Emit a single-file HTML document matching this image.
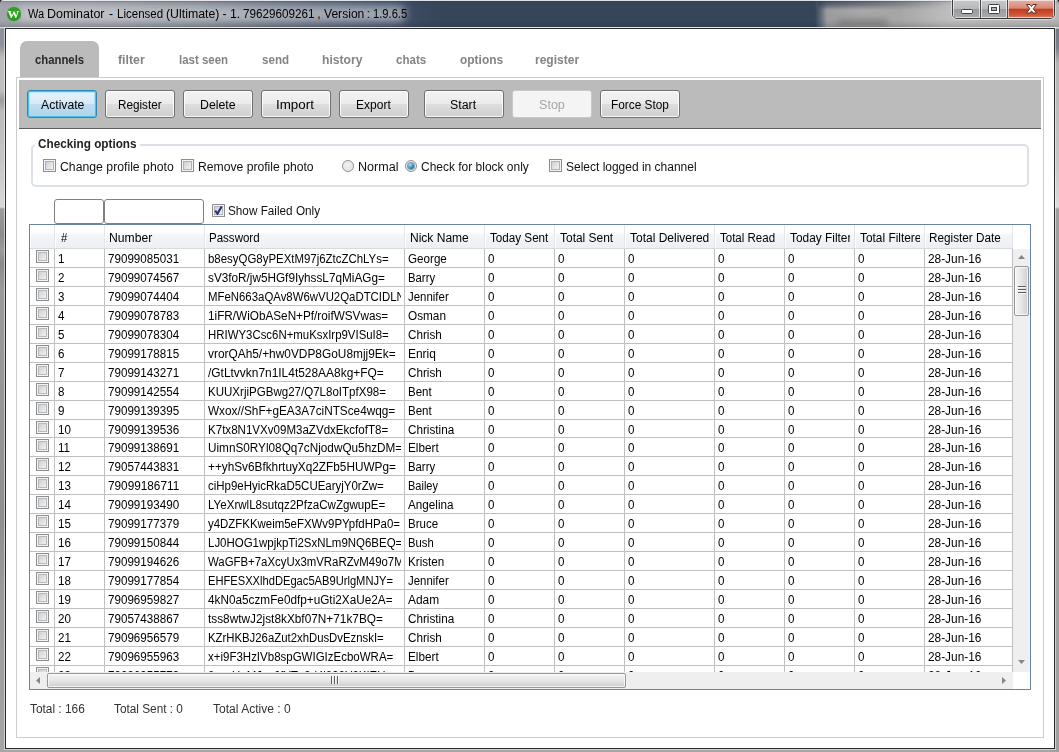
<!DOCTYPE html><html><head><meta charset="utf-8"><title>Wa Dominator</title><style>*{box-sizing:border-box;margin:0;padding:0}
html,body{width:1059px;height:752px;overflow:hidden}
body{position:relative;font-family:"Liberation Sans",sans-serif;font-size:12px;color:#000;background:#9a9a9a}
.abs{position:absolute}
.t{position:absolute;display:inline-block;white-space:nowrap;line-height:16px;font-size:12px;transform-origin:0 0}
#frame{position:absolute;left:0;top:0;width:1059px;height:752px;background:linear-gradient(180deg,#8d9199 0,#8d9199 45px,#bdbdbd 58px,#c0c0c0 90px,#9c9c9c 100px,#bcbcbc 112px,#c6c6c6 160px,#d6d6d6 205px,#dadada 207px,#9c9c9c 209px,#8c8c8c 235px,#9c9c9c 250px,#8a8a8a 262px,#9a9a9a 290px,#969696 420px,#8e8e8e 520px,#9c9c9c 600px,#a0a0a0 700px,#a6a6a6 752px)}
#tbar{position:absolute;left:0;top:0;width:1059px;height:29px;background:linear-gradient(90deg,#a2a5ab 0,#9c9fa6 110px,#878d97 200px,#6e7786 270px,#566276 340px,#43516a 395px,#3a495e 420px,#36455a 445px,#36455a 815px,#5a6474 820px,#9a9b9d 827px,#a8a8a8 860px,#a6a6a6 900px,#bebebe 950px,#b6b6b6 1059px)}
#tglow{position:absolute;left:16px;top:6px;width:390px;height:16px;border-radius:8px;background:linear-gradient(90deg,rgba(255,255,255,.34) 0,rgba(255,255,255,.36) 35%,rgba(255,255,255,.5) 100%);filter:blur(4px)}
#tshade{position:absolute;left:0;top:0;width:1059px;height:29px;background:linear-gradient(180deg,rgba(232,234,240,.95) 0,rgba(232,234,240,.95) 1px,rgba(40,44,54,.24) 1px,rgba(40,44,54,.24) 2px,rgba(40,44,54,.08) 2px,rgba(40,44,54,0) 6px,rgba(40,44,54,0) 20px,rgba(30,34,44,.12) 25px,rgba(30,34,44,.2) 27px,rgba(214,218,226,.9) 27px,rgba(214,218,226,.9) 28px,rgba(0,0,0,0) 28px)}
#client{position:absolute;left:5px;top:28px;width:1050px;height:721px;background:#fff;border:1px solid #2a2a2a;box-shadow:0 0 0 1px rgba(255,255,255,.5)}
#icon{position:absolute;left:7px;top:7px;width:14px;height:14px;border-radius:50%;background:radial-gradient(circle at 50% 40%,#35ad26,#279a1b 65%,#1f8a16);box-shadow:0 0 1px #4aa83e}
#icon span{position:absolute;left:1.200px;top:-0.5px;width:11px;color:#fff;font-family:'Liberation Serif',serif;font-weight:bold;font-size:11px;line-height:15px;text-align:center;transform:scaleX(1.08);transform-origin:50% 50%}
#capb{position:absolute;left:952px;top:-1px;width:103px;height:20px;border:1px solid #3b3b3b;border-radius:0 0 5px 5px;overflow:hidden;box-shadow:0 0 0 1px rgba(255,255,255,.45)}
#capb .b{position:absolute;top:0;height:18px;box-shadow:inset 0 0 0 1px rgba(255,255,255,.6)}
#bmin{left:0;width:28px;background:linear-gradient(180deg,#c6c8ca 0,#b6b8ba 48%,#9a9c9e 52%,#a8aaac 100%);border-right:1px solid #4a4a4a}
#bmax{left:28px;width:27px;background:linear-gradient(180deg,#c6c8ca 0,#b6b8ba 48%,#9a9c9e 52%,#a8aaac 100%);border-right:1px solid #4a4a4a}
#bclose{left:55px;width:46px;background:linear-gradient(180deg,#e2b0a4 0,#d68a78 45%,#c33c1f 52%,#cf5a3e 85%,#dd8468 100%)}
.tabsel{position:absolute;left:20px;top:41px;width:79px;height:37px;background:#bbb;border-radius:7px 7px 0 0}
#tc{position:absolute;left:16px;top:77px;width:1028px;height:661px;border:1px solid #cdcdcd;background:#fff}
#tool{position:absolute;left:19px;top:80px;width:1022px;height:49px;background:#bbb;border-bottom:1px solid #5e5e5e}
.btn{position:absolute;top:90px;height:28px;border:1px solid #707070;border-radius:3px;background:linear-gradient(180deg,#f3f3f3 0,#ebebeb 48%,#dddddd 52%,#cfcfcf 100%);box-shadow:inset 0 0 0 1px rgba(255,255,255,.85)}
.btn.act{border-color:#2f86b4;background:linear-gradient(180deg,#e8f2f9 0,#d8eaf6 48%,#c0ddf0 52%,#aed2ea 100%);box-shadow:inset 0 0 0 1px #46c4ea, inset 0 0 0 2px rgba(150,220,245,.6)}
.btn.dis{border-color:#c6c9cb;background:#f4f4f4;box-shadow:none}
#gb{position:absolute;left:31px;top:144px;width:998px;height:43px;border:2px solid #dbe1e7;border-radius:5px}
#gbm{position:absolute;left:35px;top:142px;width:105px;height:6px;background:#fff}
.chk{position:absolute;width:13px;height:13px;border:1px solid #8e8f8f;background:#f4f4f4;box-shadow:inset 0 0 0 1px #f4f4f4, inset 0 0 0 2px #aeb3b9}
.chk:after{content:"";position:absolute;left:2px;top:2px;width:7px;height:7px;background:linear-gradient(135deg,#cbcfd5,#f3f3f3)}
.chk svg{position:absolute;left:0;top:0;z-index:2}
.rad{position:absolute;width:12px;height:12px;border-radius:50%;border:1px solid #8e8f8f;background:radial-gradient(circle at 45% 45%,#f4f4f4 0,#e2e4e7 55%,#c4c8cd 100%);box-shadow:inset 0 0 0 1px #f0f0f0}
.rad.on:after{content:"";position:absolute;left:2px;top:2px;width:6px;height:6px;border-radius:50%;background:radial-gradient(circle at 35% 30%,#a5e3f7,#2a8fc4 55%,#0f4777);box-shadow:0 0 0 1px rgba(60,90,120,.55)}
.tbx{position:absolute;top:199px;height:25px;border:1px solid #7f8184;border-radius:3px;background:#fff}
#grid{position:absolute;left:29px;top:224px;width:1002px;height:466px;border:1px solid #6a84a3;background:#fff;overflow:hidden}
#ghead{position:absolute;left:0;top:0;width:983px;height:24px;background:#fff;border-bottom:1px solid #d8dade}
.hc{position:absolute;top:0;height:23px;background:linear-gradient(180deg,#ffffff 0,#ffffff 30%,#f3f5f8 45%,#eceff3 100%);border-right:1px solid #e2e5ea;box-shadow:inset 1px 0 0 #fff}
.hclip{position:absolute;left:0;top:0;right:4px;height:23px;overflow:hidden}
#gbody{position:absolute;left:0;top:24px;width:983px;height:423px;overflow:hidden}
.row{position:absolute;left:0;height:19px;width:983px;border-bottom:1px solid #c0c0c0}
.c{position:absolute;top:0;bottom:0;border-right:1px solid #c0c0c0;overflow:hidden}
.cb{position:absolute;left:6px;top:1px;width:13px;height:13px;border:1px solid #8e8f8f;background:#f4f4f4;box-shadow:inset 0 0 0 1px #f4f4f4, inset 0 0 0 2px #b6b8bb}
.cb:after{content:"";position:absolute;left:2px;top:2px;width:7px;height:7px;background:linear-gradient(135deg,#cdcfd2,#f3f3f3)}
#vs{position:absolute;left:983px;top:24px;width:17px;height:423px;background:#efefef}
#vthumb{position:absolute;left:1px;top:17px;width:15px;height:50px;border:1px solid #979797;border-radius:2px;background:linear-gradient(90deg,#f5f5f5 0,#e6e6e6 50%,#cecece 100%);box-shadow:inset 0 0 0 1px rgba(255,255,255,.7)}
#hs{position:absolute;left:0;top:447px;width:983px;height:17px;background:#efefef}
#hthumb{position:absolute;left:17px;top:1px;width:579px;height:15px;border:1px solid #979797;border-radius:2px;background:linear-gradient(180deg,#f5f5f5 0,#e6e6e6 50%,#cecece 100%);box-shadow:inset 0 0 0 1px rgba(255,255,255,.7)}
.arr{position:absolute;width:0;height:0}

.corner{position:absolute;width:3px;height:3px;background:#111}
.c:after{content:"";position:absolute;right:0;top:0;width:3px;height:100%;background:#fff}
#tband{position:absolute;left:818px;top:1px;width:135px;height:9px;background:linear-gradient(180deg,rgba(54,66,86,.85) 0,rgba(54,66,86,.6) 4px,rgba(54,66,86,0) 9px);-webkit-mask-image:linear-gradient(90deg,#000 0,rgba(0,0,0,.7) 40%,transparent 100%);mask-image:linear-gradient(90deg,#000 0,rgba(0,0,0,.7) 40%,transparent 100%)}
#tpatch{position:absolute;left:838px;top:19px;width:50px;height:8px;background:rgba(105,105,105,.55);filter:blur(3px)}
#frameR{position:absolute;left:1050px;top:29px;width:9px;height:723px;background:linear-gradient(180deg,#747983 0,#7c8089 18px,#b4b4b4 34px,#bcbcbc 80px,#c8c8c8 140px,#dcdcdc 177px,#dedede 178px,#a0a0a0 180px,#9e9e9e 400px,#a0a0a0 723px)}
#ttext{position:absolute;left:0;top:0;width:420px;height:28px}
</style></head><body>
<div id="frame"></div>
<div id="frameR"></div>
<div id="tbar"></div>
<div id="tglow"></div>
<div id="tband"></div>
<div id="tpatch"></div>
<div id="tshade"></div>
<div id="icon"><span>W</span></div>
<svg class="abs" style="left:0;top:0" width="4" height="4"><path d="M0 0h3.200A3.200 3.200 0 0 0 0 3.200z" fill="#0a0a0a"/></svg>
<svg class="abs" style="left:1055px;top:0" width="4" height="4"><path d="M4 0h-3.200A3.200 3.200 0 0 1 4 3.200z" fill="#0a0a0a"/></svg>
<div id="capb"><div class="b" id="bmin"></div><div class="b" id="bmax"></div><div class="b" id="bclose"></div>
<svg class="abs" style="left:0;top:0" width="101" height="19" viewBox="0 0 101 19">
<rect x="8.5" y="9.500" width="11" height="4" rx="1" fill="#fff" stroke="#3f4247" stroke-width="1"/>
<rect x="35.5" y="4.500" width="11" height="9" rx="1" fill="#fff" stroke="#3f4247" stroke-width="1"/>
<rect x="38.5" y="7.500" width="5" height="3" fill="#aeb0b3" stroke="#3f4247" stroke-width="1"/>
<path d="M73.5 4.500h3.600l1.400 2.100 1.400-2.100h3.600l-3.300 4.250 3.300 4.250h-3.600l-1.400-2.100-1.400 2.100h-3.600l3.300-4.250z" fill="#fff" stroke="#6a2a20" stroke-width="1" stroke-linejoin="round"/>
</svg></div>
<div id="client"></div>
<div class="tabsel"></div>
<div id="tc"></div>
<div id="tool"></div>
<div class="btn act" style="left:27px;width:70px"></div>
<div class="btn" style="left:105px;width:70px"></div>
<div class="btn" style="left:183px;width:70px"></div>
<div class="btn" style="left:261px;width:70px"></div>
<div class="btn" style="left:339px;width:70px"></div>
<div class="btn" style="left:424px;width:80px"></div>
<div class="btn dis" style="left:512px;width:80px"></div>
<div class="btn" style="left:600px;width:80px"></div>
<div id="gb"></div>
<div id="gbm"></div>
<i class="chk" style="left:43px;top:159px"></i>
<i class="chk" style="left:181px;top:159px"></i>
<i class="rad" style="left:342px;top:160px"></i>
<i class="rad on" style="left:405px;top:160px"></i>
<i class="chk" style="left:549px;top:159px"></i>
<div class="tbx" style="left:54px;width:50px"></div>
<div class="tbx" style="left:104px;width:100px"></div>
<i class="chk" style="left:212px;top:204px"><svg width="11" height="11" viewBox="0 0 11 11"><path d="M2.200 5.600l2.300 3 4.200-7.200" fill="none" stroke="#2b2f7a" stroke-width="2"/></svg></i>

<div id="ttext">
<span class="t" style="left:27.50px;top:6px;font-size:12px;transform:scaleX(0.9167);color:#000">Wa</span>
<span class="t" style="left:47.36px;top:6px;font-size:12px;transform:scaleX(1.0389);color:#000">Dominator</span>
<span class="t" style="left:109.00px;top:6px;font-size:12px;transform:scaleX(1.0000);color:#000">-</span>
<span class="t" style="left:116.74px;top:6px;font-size:12px;transform:scaleX(0.9609);color:#000">Licensed</span>
<span class="t" style="left:165.67px;top:6px;font-size:12px;transform:scaleX(1.0260);color:#000">(Ultimate)</span>
<span class="t" style="left:222.50px;top:6px;font-size:12px;transform:scaleX(1.0000);color:#000">-</span>
<span class="t" style="left:229.97px;top:6px;font-size:12px;transform:scaleX(1.0250);color:#000">1.</span>
<span class="t" style="left:243.33px;top:6px;font-size:12px;transform:scaleX(0.9722);color:#000">79629609261</span>
<span class="t" style="left:317.25px;top:6px;font-size:12px;transform:scaleX(1.0000);color:#000">,</span>
<span class="t" style="left:323.90px;top:6px;font-size:12px;transform:scaleX(1.0077);color:#000">Version</span>
<span class="t" style="left:366.75px;top:6px;font-size:12px;transform:scaleX(1.0000);color:#000">:</span>
<span class="t" style="left:373.17px;top:6px;font-size:12px;transform:scaleX(0.9314);color:#000">1.9.6.5</span>
</div>
<span class="t" style="left:35.20px;top:52px;font-size:12px;font-weight:bold;transform:scaleX(0.9442);color:#2a2a2a">channels</span>
<span class="t" style="left:118.30px;top:52px;font-size:12px;font-weight:bold;transform:scaleX(1.0308);color:#848484">filter</span>
<span class="t" style="left:179.05px;top:52px;font-size:12px;font-weight:bold;transform:scaleX(0.9540);color:#848484">last seen</span>
<span class="t" style="left:261.63px;top:52px;font-size:12px;font-weight:bold;transform:scaleX(0.9654);color:#848484">send</span>
<span class="t" style="left:321.59px;top:52px;font-size:12px;font-weight:bold;transform:scaleX(1.0103);color:#848484">history</span>
<span class="t" style="left:395.70px;top:52px;font-size:12px;font-weight:bold;transform:scaleX(0.9613);color:#848484">chats</span>
<span class="t" style="left:459.50px;top:52px;font-size:12px;font-weight:bold;transform:scaleX(0.9953);color:#848484">options</span>
<span class="t" style="left:534.70px;top:52px;font-size:12px;font-weight:bold;transform:scaleX(1.0023);color:#848484">register</span>
<span class="t" style="left:40.80px;top:97px;font-size:12px;transform:scaleX(1.0167);color:#000">Activate</span>
<span class="t" style="left:118.02px;top:97px;font-size:12px;transform:scaleX(0.9773);color:#000">Register</span>
<span class="t" style="left:200.27px;top:97px;font-size:12px;transform:scaleX(1.0273);color:#000">Delete</span>
<span class="t" style="left:276.18px;top:97px;font-size:12px;transform:scaleX(1.1152);color:#000">Import</span>
<span class="t" style="left:356.20px;top:97px;font-size:12px;transform:scaleX(1.0029);color:#000">Export</span>
<span class="t" style="left:450.47px;top:97px;font-size:12px;transform:scaleX(1.0333);color:#000">Start</span>
<span class="t" style="left:538.85px;top:97px;font-size:12px;transform:scaleX(1.0478);color:#a6a6a6">Stop</span>
<span class="t" style="left:611.21px;top:97px;font-size:12px;transform:scaleX(0.9860);color:#000">Force Stop</span>
<span class="t" style="left:37.60px;top:136px;font-size:12px;font-weight:bold;transform:scaleX(0.9790);color:#222">Checking options</span>
<span class="t" style="left:60.18px;top:159px;font-size:12px;transform:scaleX(1.0209);color:#111">Change profile photo</span>
<span class="t" style="left:197.69px;top:159px;font-size:12px;transform:scaleX(1.0133);color:#111">Remove profile photo</span>
<span class="t" style="left:357.55px;top:159px;font-size:12px;transform:scaleX(1.0459);color:#111">Normal</span>
<span class="t" style="left:420.80px;top:159px;font-size:12px;transform:scaleX(0.9981);color:#111">Check for block only</span>
<span class="t" style="left:565.70px;top:159px;font-size:12px;transform:scaleX(0.9984);color:#111">Select logged in channel</span>
<span class="t" style="left:228.12px;top:203px;font-size:12px;transform:scaleX(0.9785);color:#111">Show Failed Only</span>
<span class="t" style="left:29.80px;top:701px;font-size:12px;transform:scaleX(0.9891);color:#333">Total : 166</span>
<span class="t" style="left:114.20px;top:701px;font-size:12px;transform:scaleX(0.9843);color:#333">Total Sent : 0</span>
<span class="t" style="left:213.40px;top:701px;font-size:12px;transform:scaleX(1.0039);color:#333">Total Active : 0</span>
<div id="grid">
<div id="ghead">
<div class="hc" style="left:0px;width:25px"></div>
<div class="hc" style="left:25px;width:50px"><div class="hclip"><span class="t" style="left:5.90px;top:5px;transform:scaleX(0.9500)">#</span></div></div>
<div class="hc" style="left:75px;width:100px"><div class="hclip"><span class="t" style="left:4.49px;top:5px;transform:scaleX(1.0119)">Number</span></div></div>
<div class="hc" style="left:175px;width:200px"><div class="hclip"><span class="t" style="left:4.24px;top:5px;transform:scaleX(0.9608)">Password</span></div></div>
<div class="hc" style="left:375px;width:80px"><div class="hclip"><span class="t" style="left:4.60px;top:5px;transform:scaleX(1.0018)">Nick Name</span></div></div>
<div class="hc" style="left:455px;width:70px"><div class="hclip"><span class="t" style="left:5.40px;top:5px;transform:scaleX(0.9717)">Today Sent</span></div></div>
<div class="hc" style="left:525px;width:70px"><div class="hclip"><span class="t" style="left:4.90px;top:5px;transform:scaleX(0.9962)">Total Sent</span></div></div>
<div class="hc" style="left:595px;width:90px"><div class="hclip"><span class="t" style="left:5.00px;top:5px;transform:scaleX(0.9987)">Total Delivered</span></div></div>
<div class="hc" style="left:685px;width:70px"><div class="hclip"><span class="t" style="left:4.90px;top:5px;transform:scaleX(0.9596)">Total Read</span></div></div>
<div class="hc" style="left:755px;width:70px"><div class="hclip"><span class="t" style="left:5.40px;top:5px;transform:scaleX(0.9900)">Today Filtered</span></div></div>
<div class="hc" style="left:825px;width:70px"><div class="hclip"><span class="t" style="left:4.90px;top:5px;transform:scaleX(0.9900)">Total Filtered</span></div></div>
<div class="hc" style="left:895px;width:88px"><div class="hclip"><span class="t" style="left:4.02px;top:5px;transform:scaleX(0.9778)">Register Date</span></div></div>
</div>
<div id="gbody">
<div class="row" style="top:0px;height:19px">
<div class="c" style="left:0;width:25px"><i class="cb"></i></div>
<div class="c" style="left:25px;width:50px"><span class="t" style="left:2.70px;top:2px;transform:scaleX(0.9650)">1</span></div>
<div class="c" style="left:75px;width:100px"><span class="t" style="left:2.70px;top:2px;transform:scaleX(0.9685)">79099085031</span></div>
<div class="c" style="left:175px;width:200px"><span class="t" style="left:2.70px;top:2px;transform:scaleX(0.9529)">b8esyQG8yPEXtM97j6ZtcZChLYs=</span></div>
<div class="c" style="left:375px;width:80px"><span class="t" style="left:2.70px;top:2px;transform:scaleX(0.9700)">George</span></div>
<div class="c" style="left:455px;width:70px"><span class="t" style="left:2.70px;top:2px;transform:scaleX(0.9650)">0</span></div>
<div class="c" style="left:525px;width:70px"><span class="t" style="left:2.70px;top:2px;transform:scaleX(0.9650)">0</span></div>
<div class="c" style="left:595px;width:90px"><span class="t" style="left:2.70px;top:2px;transform:scaleX(0.9650)">0</span></div>
<div class="c" style="left:685px;width:70px"><span class="t" style="left:2.70px;top:2px;transform:scaleX(0.9650)">0</span></div>
<div class="c" style="left:755px;width:70px"><span class="t" style="left:2.70px;top:2px;transform:scaleX(0.9650)">0</span></div>
<div class="c" style="left:825px;width:70px"><span class="t" style="left:2.70px;top:2px;transform:scaleX(0.9650)">0</span></div>
<div class="c" style="left:895px;width:88px"><span class="t" style="left:2.70px;top:2px;transform:scaleX(0.9870)">28-Jun-16</span></div>
</div>
<div class="row" style="top:19px;height:19px">
<div class="c" style="left:0;width:25px"><i class="cb"></i></div>
<div class="c" style="left:25px;width:50px"><span class="t" style="left:2.70px;top:2px;transform:scaleX(0.9650)">2</span></div>
<div class="c" style="left:75px;width:100px"><span class="t" style="left:2.70px;top:2px;transform:scaleX(0.9685)">79099074567</span></div>
<div class="c" style="left:175px;width:200px"><span class="t" style="left:2.70px;top:2px;transform:scaleX(0.9800)">sV3foR/jw5HGf9IyhssL7qMiAGg=</span></div>
<div class="c" style="left:375px;width:80px"><span class="t" style="left:2.70px;top:2px;transform:scaleX(0.9448)">Barry</span></div>
<div class="c" style="left:455px;width:70px"><span class="t" style="left:2.70px;top:2px;transform:scaleX(0.9650)">0</span></div>
<div class="c" style="left:525px;width:70px"><span class="t" style="left:2.70px;top:2px;transform:scaleX(0.9650)">0</span></div>
<div class="c" style="left:595px;width:90px"><span class="t" style="left:2.70px;top:2px;transform:scaleX(0.9650)">0</span></div>
<div class="c" style="left:685px;width:70px"><span class="t" style="left:2.70px;top:2px;transform:scaleX(0.9650)">0</span></div>
<div class="c" style="left:755px;width:70px"><span class="t" style="left:2.70px;top:2px;transform:scaleX(0.9650)">0</span></div>
<div class="c" style="left:825px;width:70px"><span class="t" style="left:2.70px;top:2px;transform:scaleX(0.9650)">0</span></div>
<div class="c" style="left:895px;width:88px"><span class="t" style="left:2.70px;top:2px;transform:scaleX(0.9870)">28-Jun-16</span></div>
</div>
<div class="row" style="top:38px;height:19px">
<div class="c" style="left:0;width:25px"><i class="cb"></i></div>
<div class="c" style="left:25px;width:50px"><span class="t" style="left:2.70px;top:2px;transform:scaleX(0.9650)">3</span></div>
<div class="c" style="left:75px;width:100px"><span class="t" style="left:2.70px;top:2px;transform:scaleX(0.9685)">79099074404</span></div>
<div class="c" style="left:175px;width:200px"><span class="t" style="left:2.70px;top:2px;transform:scaleX(0.9500)">MFeN663aQAv8W6wVU2QaDTCIDLNo=</span></div>
<div class="c" style="left:375px;width:80px"><span class="t" style="left:2.70px;top:2px;transform:scaleX(0.9535)">Jennifer</span></div>
<div class="c" style="left:455px;width:70px"><span class="t" style="left:2.70px;top:2px;transform:scaleX(0.9650)">0</span></div>
<div class="c" style="left:525px;width:70px"><span class="t" style="left:2.70px;top:2px;transform:scaleX(0.9650)">0</span></div>
<div class="c" style="left:595px;width:90px"><span class="t" style="left:2.70px;top:2px;transform:scaleX(0.9650)">0</span></div>
<div class="c" style="left:685px;width:70px"><span class="t" style="left:2.70px;top:2px;transform:scaleX(0.9650)">0</span></div>
<div class="c" style="left:755px;width:70px"><span class="t" style="left:2.70px;top:2px;transform:scaleX(0.9650)">0</span></div>
<div class="c" style="left:825px;width:70px"><span class="t" style="left:2.70px;top:2px;transform:scaleX(0.9650)">0</span></div>
<div class="c" style="left:895px;width:88px"><span class="t" style="left:2.70px;top:2px;transform:scaleX(0.9870)">28-Jun-16</span></div>
</div>
<div class="row" style="top:57px;height:19px">
<div class="c" style="left:0;width:25px"><i class="cb"></i></div>
<div class="c" style="left:25px;width:50px"><span class="t" style="left:2.70px;top:2px;transform:scaleX(0.9650)">4</span></div>
<div class="c" style="left:75px;width:100px"><span class="t" style="left:2.70px;top:2px;transform:scaleX(0.9685)">79099078783</span></div>
<div class="c" style="left:175px;width:200px"><span class="t" style="left:2.70px;top:2px;transform:scaleX(0.9788)">1iFR/WiObASeN+Pf/roifWSVwas=</span></div>
<div class="c" style="left:375px;width:80px"><span class="t" style="left:2.70px;top:2px;transform:scaleX(0.9816)">Osman</span></div>
<div class="c" style="left:455px;width:70px"><span class="t" style="left:2.70px;top:2px;transform:scaleX(0.9650)">0</span></div>
<div class="c" style="left:525px;width:70px"><span class="t" style="left:2.70px;top:2px;transform:scaleX(0.9650)">0</span></div>
<div class="c" style="left:595px;width:90px"><span class="t" style="left:2.70px;top:2px;transform:scaleX(0.9650)">0</span></div>
<div class="c" style="left:685px;width:70px"><span class="t" style="left:2.70px;top:2px;transform:scaleX(0.9650)">0</span></div>
<div class="c" style="left:755px;width:70px"><span class="t" style="left:2.70px;top:2px;transform:scaleX(0.9650)">0</span></div>
<div class="c" style="left:825px;width:70px"><span class="t" style="left:2.70px;top:2px;transform:scaleX(0.9650)">0</span></div>
<div class="c" style="left:895px;width:88px"><span class="t" style="left:2.70px;top:2px;transform:scaleX(0.9870)">28-Jun-16</span></div>
</div>
<div class="row" style="top:76px;height:19px">
<div class="c" style="left:0;width:25px"><i class="cb"></i></div>
<div class="c" style="left:25px;width:50px"><span class="t" style="left:2.70px;top:2px;transform:scaleX(0.9650)">5</span></div>
<div class="c" style="left:75px;width:100px"><span class="t" style="left:2.70px;top:2px;transform:scaleX(0.9685)">79099078304</span></div>
<div class="c" style="left:175px;width:200px"><span class="t" style="left:2.70px;top:2px;transform:scaleX(0.9511)">HRIWY3Csc6N+muKsxIrp9VISuI8=</span></div>
<div class="c" style="left:375px;width:80px"><span class="t" style="left:2.70px;top:2px;transform:scaleX(0.9735)">Chrish</span></div>
<div class="c" style="left:455px;width:70px"><span class="t" style="left:2.70px;top:2px;transform:scaleX(0.9650)">0</span></div>
<div class="c" style="left:525px;width:70px"><span class="t" style="left:2.70px;top:2px;transform:scaleX(0.9650)">0</span></div>
<div class="c" style="left:595px;width:90px"><span class="t" style="left:2.70px;top:2px;transform:scaleX(0.9650)">0</span></div>
<div class="c" style="left:685px;width:70px"><span class="t" style="left:2.70px;top:2px;transform:scaleX(0.9650)">0</span></div>
<div class="c" style="left:755px;width:70px"><span class="t" style="left:2.70px;top:2px;transform:scaleX(0.9650)">0</span></div>
<div class="c" style="left:825px;width:70px"><span class="t" style="left:2.70px;top:2px;transform:scaleX(0.9650)">0</span></div>
<div class="c" style="left:895px;width:88px"><span class="t" style="left:2.70px;top:2px;transform:scaleX(0.9870)">28-Jun-16</span></div>
</div>
<div class="row" style="top:95px;height:19px">
<div class="c" style="left:0;width:25px"><i class="cb"></i></div>
<div class="c" style="left:25px;width:50px"><span class="t" style="left:2.70px;top:2px;transform:scaleX(0.9650)">6</span></div>
<div class="c" style="left:75px;width:100px"><span class="t" style="left:2.70px;top:2px;transform:scaleX(0.9685)">79099178815</span></div>
<div class="c" style="left:175px;width:200px"><span class="t" style="left:2.70px;top:2px;transform:scaleX(0.9905)">vrorQAh5/+hw0VDP8GoU8mjj9Ek=</span></div>
<div class="c" style="left:375px;width:80px"><span class="t" style="left:2.70px;top:2px;transform:scaleX(0.9963)">Enriq</span></div>
<div class="c" style="left:455px;width:70px"><span class="t" style="left:2.70px;top:2px;transform:scaleX(0.9650)">0</span></div>
<div class="c" style="left:525px;width:70px"><span class="t" style="left:2.70px;top:2px;transform:scaleX(0.9650)">0</span></div>
<div class="c" style="left:595px;width:90px"><span class="t" style="left:2.70px;top:2px;transform:scaleX(0.9650)">0</span></div>
<div class="c" style="left:685px;width:70px"><span class="t" style="left:2.70px;top:2px;transform:scaleX(0.9650)">0</span></div>
<div class="c" style="left:755px;width:70px"><span class="t" style="left:2.70px;top:2px;transform:scaleX(0.9650)">0</span></div>
<div class="c" style="left:825px;width:70px"><span class="t" style="left:2.70px;top:2px;transform:scaleX(0.9650)">0</span></div>
<div class="c" style="left:895px;width:88px"><span class="t" style="left:2.70px;top:2px;transform:scaleX(0.9870)">28-Jun-16</span></div>
</div>
<div class="row" style="top:114px;height:19px">
<div class="c" style="left:0;width:25px"><i class="cb"></i></div>
<div class="c" style="left:25px;width:50px"><span class="t" style="left:2.70px;top:2px;transform:scaleX(0.9650)">7</span></div>
<div class="c" style="left:75px;width:100px"><span class="t" style="left:2.70px;top:2px;transform:scaleX(0.9685)">79099143271</span></div>
<div class="c" style="left:175px;width:200px"><span class="t" style="left:2.70px;top:2px;transform:scaleX(0.9943)">/GtLtvvkn7n1IL4t528AA8kg+FQ=</span></div>
<div class="c" style="left:375px;width:80px"><span class="t" style="left:2.70px;top:2px;transform:scaleX(0.9735)">Chrish</span></div>
<div class="c" style="left:455px;width:70px"><span class="t" style="left:2.70px;top:2px;transform:scaleX(0.9650)">0</span></div>
<div class="c" style="left:525px;width:70px"><span class="t" style="left:2.70px;top:2px;transform:scaleX(0.9650)">0</span></div>
<div class="c" style="left:595px;width:90px"><span class="t" style="left:2.70px;top:2px;transform:scaleX(0.9650)">0</span></div>
<div class="c" style="left:685px;width:70px"><span class="t" style="left:2.70px;top:2px;transform:scaleX(0.9650)">0</span></div>
<div class="c" style="left:755px;width:70px"><span class="t" style="left:2.70px;top:2px;transform:scaleX(0.9650)">0</span></div>
<div class="c" style="left:825px;width:70px"><span class="t" style="left:2.70px;top:2px;transform:scaleX(0.9650)">0</span></div>
<div class="c" style="left:895px;width:88px"><span class="t" style="left:2.70px;top:2px;transform:scaleX(0.9870)">28-Jun-16</span></div>
</div>
<div class="row" style="top:133px;height:19px">
<div class="c" style="left:0;width:25px"><i class="cb"></i></div>
<div class="c" style="left:25px;width:50px"><span class="t" style="left:2.70px;top:2px;transform:scaleX(0.9650)">8</span></div>
<div class="c" style="left:75px;width:100px"><span class="t" style="left:2.70px;top:2px;transform:scaleX(0.9685)">79099142554</span></div>
<div class="c" style="left:175px;width:200px"><span class="t" style="left:2.70px;top:2px;transform:scaleX(0.9616)">KUUXrjiPGBwg27/Q7L8oITpfX98=</span></div>
<div class="c" style="left:375px;width:80px"><span class="t" style="left:2.70px;top:2px;transform:scaleX(0.9600)">Bent</span></div>
<div class="c" style="left:455px;width:70px"><span class="t" style="left:2.70px;top:2px;transform:scaleX(0.9650)">0</span></div>
<div class="c" style="left:525px;width:70px"><span class="t" style="left:2.70px;top:2px;transform:scaleX(0.9650)">0</span></div>
<div class="c" style="left:595px;width:90px"><span class="t" style="left:2.70px;top:2px;transform:scaleX(0.9650)">0</span></div>
<div class="c" style="left:685px;width:70px"><span class="t" style="left:2.70px;top:2px;transform:scaleX(0.9650)">0</span></div>
<div class="c" style="left:755px;width:70px"><span class="t" style="left:2.70px;top:2px;transform:scaleX(0.9650)">0</span></div>
<div class="c" style="left:825px;width:70px"><span class="t" style="left:2.70px;top:2px;transform:scaleX(0.9650)">0</span></div>
<div class="c" style="left:895px;width:88px"><span class="t" style="left:2.70px;top:2px;transform:scaleX(0.9870)">28-Jun-16</span></div>
</div>
<div class="row" style="top:152px;height:19px">
<div class="c" style="left:0;width:25px"><i class="cb"></i></div>
<div class="c" style="left:25px;width:50px"><span class="t" style="left:2.70px;top:2px;transform:scaleX(0.9650)">9</span></div>
<div class="c" style="left:75px;width:100px"><span class="t" style="left:2.70px;top:2px;transform:scaleX(0.9685)">79099139395</span></div>
<div class="c" style="left:175px;width:200px"><span class="t" style="left:2.70px;top:2px;transform:scaleX(0.9811)">Wxox//ShF+gEA3A7ciNTSce4wqg=</span></div>
<div class="c" style="left:375px;width:80px"><span class="t" style="left:2.70px;top:2px;transform:scaleX(0.9600)">Bent</span></div>
<div class="c" style="left:455px;width:70px"><span class="t" style="left:2.70px;top:2px;transform:scaleX(0.9650)">0</span></div>
<div class="c" style="left:525px;width:70px"><span class="t" style="left:2.70px;top:2px;transform:scaleX(0.9650)">0</span></div>
<div class="c" style="left:595px;width:90px"><span class="t" style="left:2.70px;top:2px;transform:scaleX(0.9650)">0</span></div>
<div class="c" style="left:685px;width:70px"><span class="t" style="left:2.70px;top:2px;transform:scaleX(0.9650)">0</span></div>
<div class="c" style="left:755px;width:70px"><span class="t" style="left:2.70px;top:2px;transform:scaleX(0.9650)">0</span></div>
<div class="c" style="left:825px;width:70px"><span class="t" style="left:2.70px;top:2px;transform:scaleX(0.9650)">0</span></div>
<div class="c" style="left:895px;width:88px"><span class="t" style="left:2.70px;top:2px;transform:scaleX(0.9870)">28-Jun-16</span></div>
</div>
<div class="row" style="top:171px;height:18px">
<div class="c" style="left:0;width:25px"><i class="cb"></i></div>
<div class="c" style="left:25px;width:50px"><span class="t" style="left:2.70px;top:2px;transform:scaleX(0.9650)">10</span></div>
<div class="c" style="left:75px;width:100px"><span class="t" style="left:2.70px;top:2px;transform:scaleX(0.9685)">79099139536</span></div>
<div class="c" style="left:175px;width:200px"><span class="t" style="left:2.70px;top:2px;transform:scaleX(0.9631)">K7tx8N1VXv09M3aZVdxEkcfofT8=</span></div>
<div class="c" style="left:375px;width:80px"><span class="t" style="left:2.70px;top:2px;transform:scaleX(0.9745)">Christina</span></div>
<div class="c" style="left:455px;width:70px"><span class="t" style="left:2.70px;top:2px;transform:scaleX(0.9650)">0</span></div>
<div class="c" style="left:525px;width:70px"><span class="t" style="left:2.70px;top:2px;transform:scaleX(0.9650)">0</span></div>
<div class="c" style="left:595px;width:90px"><span class="t" style="left:2.70px;top:2px;transform:scaleX(0.9650)">0</span></div>
<div class="c" style="left:685px;width:70px"><span class="t" style="left:2.70px;top:2px;transform:scaleX(0.9650)">0</span></div>
<div class="c" style="left:755px;width:70px"><span class="t" style="left:2.70px;top:2px;transform:scaleX(0.9650)">0</span></div>
<div class="c" style="left:825px;width:70px"><span class="t" style="left:2.70px;top:2px;transform:scaleX(0.9650)">0</span></div>
<div class="c" style="left:895px;width:88px"><span class="t" style="left:2.70px;top:2px;transform:scaleX(0.9870)">28-Jun-16</span></div>
</div>
<div class="row" style="top:189px;height:19px">
<div class="c" style="left:0;width:25px"><i class="cb"></i></div>
<div class="c" style="left:25px;width:50px"><span class="t" style="left:2.70px;top:2px;transform:scaleX(0.9650)">11</span></div>
<div class="c" style="left:75px;width:100px"><span class="t" style="left:2.70px;top:2px;transform:scaleX(0.9685)">79099138691</span></div>
<div class="c" style="left:175px;width:200px"><span class="t" style="left:2.70px;top:2px;transform:scaleX(0.9798)">UimnS0RYl08Qq7cNjodwQu5hzDM=</span></div>
<div class="c" style="left:375px;width:80px"><span class="t" style="left:2.70px;top:2px;transform:scaleX(0.9774)">Elbert</span></div>
<div class="c" style="left:455px;width:70px"><span class="t" style="left:2.70px;top:2px;transform:scaleX(0.9650)">0</span></div>
<div class="c" style="left:525px;width:70px"><span class="t" style="left:2.70px;top:2px;transform:scaleX(0.9650)">0</span></div>
<div class="c" style="left:595px;width:90px"><span class="t" style="left:2.70px;top:2px;transform:scaleX(0.9650)">0</span></div>
<div class="c" style="left:685px;width:70px"><span class="t" style="left:2.70px;top:2px;transform:scaleX(0.9650)">0</span></div>
<div class="c" style="left:755px;width:70px"><span class="t" style="left:2.70px;top:2px;transform:scaleX(0.9650)">0</span></div>
<div class="c" style="left:825px;width:70px"><span class="t" style="left:2.70px;top:2px;transform:scaleX(0.9650)">0</span></div>
<div class="c" style="left:895px;width:88px"><span class="t" style="left:2.70px;top:2px;transform:scaleX(0.9870)">28-Jun-16</span></div>
</div>
<div class="row" style="top:208px;height:19px">
<div class="c" style="left:0;width:25px"><i class="cb"></i></div>
<div class="c" style="left:25px;width:50px"><span class="t" style="left:2.70px;top:2px;transform:scaleX(0.9650)">12</span></div>
<div class="c" style="left:75px;width:100px"><span class="t" style="left:2.70px;top:2px;transform:scaleX(0.9685)">79057443831</span></div>
<div class="c" style="left:175px;width:200px"><span class="t" style="left:2.70px;top:2px;transform:scaleX(0.9832)">++yhSv6BfkhrtuyXq2ZFb5HUWPg=</span></div>
<div class="c" style="left:375px;width:80px"><span class="t" style="left:2.70px;top:2px;transform:scaleX(0.9448)">Barry</span></div>
<div class="c" style="left:455px;width:70px"><span class="t" style="left:2.70px;top:2px;transform:scaleX(0.9650)">0</span></div>
<div class="c" style="left:525px;width:70px"><span class="t" style="left:2.70px;top:2px;transform:scaleX(0.9650)">0</span></div>
<div class="c" style="left:595px;width:90px"><span class="t" style="left:2.70px;top:2px;transform:scaleX(0.9650)">0</span></div>
<div class="c" style="left:685px;width:70px"><span class="t" style="left:2.70px;top:2px;transform:scaleX(0.9650)">0</span></div>
<div class="c" style="left:755px;width:70px"><span class="t" style="left:2.70px;top:2px;transform:scaleX(0.9650)">0</span></div>
<div class="c" style="left:825px;width:70px"><span class="t" style="left:2.70px;top:2px;transform:scaleX(0.9650)">0</span></div>
<div class="c" style="left:895px;width:88px"><span class="t" style="left:2.70px;top:2px;transform:scaleX(0.9870)">28-Jun-16</span></div>
</div>
<div class="row" style="top:227px;height:19px">
<div class="c" style="left:0;width:25px"><i class="cb"></i></div>
<div class="c" style="left:25px;width:50px"><span class="t" style="left:2.70px;top:2px;transform:scaleX(0.9650)">13</span></div>
<div class="c" style="left:75px;width:100px"><span class="t" style="left:2.70px;top:2px;transform:scaleX(0.9819)">79099186711</span></div>
<div class="c" style="left:175px;width:200px"><span class="t" style="left:2.70px;top:2px;transform:scaleX(0.9563)">ciHp9eHyicRkaD5CUEaryjY0rZw=</span></div>
<div class="c" style="left:375px;width:80px"><span class="t" style="left:2.70px;top:2px;transform:scaleX(0.9182)">Bailey</span></div>
<div class="c" style="left:455px;width:70px"><span class="t" style="left:2.70px;top:2px;transform:scaleX(0.9650)">0</span></div>
<div class="c" style="left:525px;width:70px"><span class="t" style="left:2.70px;top:2px;transform:scaleX(0.9650)">0</span></div>
<div class="c" style="left:595px;width:90px"><span class="t" style="left:2.70px;top:2px;transform:scaleX(0.9650)">0</span></div>
<div class="c" style="left:685px;width:70px"><span class="t" style="left:2.70px;top:2px;transform:scaleX(0.9650)">0</span></div>
<div class="c" style="left:755px;width:70px"><span class="t" style="left:2.70px;top:2px;transform:scaleX(0.9650)">0</span></div>
<div class="c" style="left:825px;width:70px"><span class="t" style="left:2.70px;top:2px;transform:scaleX(0.9650)">0</span></div>
<div class="c" style="left:895px;width:88px"><span class="t" style="left:2.70px;top:2px;transform:scaleX(0.9870)">28-Jun-16</span></div>
</div>
<div class="row" style="top:246px;height:19px">
<div class="c" style="left:0;width:25px"><i class="cb"></i></div>
<div class="c" style="left:25px;width:50px"><span class="t" style="left:2.70px;top:2px;transform:scaleX(0.9650)">14</span></div>
<div class="c" style="left:75px;width:100px"><span class="t" style="left:2.70px;top:2px;transform:scaleX(0.9685)">79099193490</span></div>
<div class="c" style="left:175px;width:200px"><span class="t" style="left:2.70px;top:2px;transform:scaleX(0.9639)">LYeXrwlL8sutqz2PfzaCwZgwupE=</span></div>
<div class="c" style="left:375px;width:80px"><span class="t" style="left:2.70px;top:2px;transform:scaleX(0.9745)">Angelina</span></div>
<div class="c" style="left:455px;width:70px"><span class="t" style="left:2.70px;top:2px;transform:scaleX(0.9650)">0</span></div>
<div class="c" style="left:525px;width:70px"><span class="t" style="left:2.70px;top:2px;transform:scaleX(0.9650)">0</span></div>
<div class="c" style="left:595px;width:90px"><span class="t" style="left:2.70px;top:2px;transform:scaleX(0.9650)">0</span></div>
<div class="c" style="left:685px;width:70px"><span class="t" style="left:2.70px;top:2px;transform:scaleX(0.9650)">0</span></div>
<div class="c" style="left:755px;width:70px"><span class="t" style="left:2.70px;top:2px;transform:scaleX(0.9650)">0</span></div>
<div class="c" style="left:825px;width:70px"><span class="t" style="left:2.70px;top:2px;transform:scaleX(0.9650)">0</span></div>
<div class="c" style="left:895px;width:88px"><span class="t" style="left:2.70px;top:2px;transform:scaleX(0.9870)">28-Jun-16</span></div>
</div>
<div class="row" style="top:265px;height:19px">
<div class="c" style="left:0;width:25px"><i class="cb"></i></div>
<div class="c" style="left:25px;width:50px"><span class="t" style="left:2.70px;top:2px;transform:scaleX(0.9650)">15</span></div>
<div class="c" style="left:75px;width:100px"><span class="t" style="left:2.70px;top:2px;transform:scaleX(0.9685)">79099177379</span></div>
<div class="c" style="left:175px;width:200px"><span class="t" style="left:2.70px;top:2px;transform:scaleX(0.9527)">y4DZFKKweim5eFXWv9PYpfdHPa0=</span></div>
<div class="c" style="left:375px;width:80px"><span class="t" style="left:2.70px;top:2px;transform:scaleX(0.9581)">Bruce</span></div>
<div class="c" style="left:455px;width:70px"><span class="t" style="left:2.70px;top:2px;transform:scaleX(0.9650)">0</span></div>
<div class="c" style="left:525px;width:70px"><span class="t" style="left:2.70px;top:2px;transform:scaleX(0.9650)">0</span></div>
<div class="c" style="left:595px;width:90px"><span class="t" style="left:2.70px;top:2px;transform:scaleX(0.9650)">0</span></div>
<div class="c" style="left:685px;width:70px"><span class="t" style="left:2.70px;top:2px;transform:scaleX(0.9650)">0</span></div>
<div class="c" style="left:755px;width:70px"><span class="t" style="left:2.70px;top:2px;transform:scaleX(0.9650)">0</span></div>
<div class="c" style="left:825px;width:70px"><span class="t" style="left:2.70px;top:2px;transform:scaleX(0.9650)">0</span></div>
<div class="c" style="left:895px;width:88px"><span class="t" style="left:2.70px;top:2px;transform:scaleX(0.9870)">28-Jun-16</span></div>
</div>
<div class="row" style="top:284px;height:19px">
<div class="c" style="left:0;width:25px"><i class="cb"></i></div>
<div class="c" style="left:25px;width:50px"><span class="t" style="left:2.70px;top:2px;transform:scaleX(0.9650)">16</span></div>
<div class="c" style="left:75px;width:100px"><span class="t" style="left:2.70px;top:2px;transform:scaleX(0.9685)">79099150844</span></div>
<div class="c" style="left:175px;width:200px"><span class="t" style="left:2.70px;top:2px;transform:scaleX(0.9557)">LJ0HOG1wpjkpTi2SxNLm9NQ6BEQ=</span></div>
<div class="c" style="left:375px;width:80px"><span class="t" style="left:2.70px;top:2px;transform:scaleX(0.9407)">Bush</span></div>
<div class="c" style="left:455px;width:70px"><span class="t" style="left:2.70px;top:2px;transform:scaleX(0.9650)">0</span></div>
<div class="c" style="left:525px;width:70px"><span class="t" style="left:2.70px;top:2px;transform:scaleX(0.9650)">0</span></div>
<div class="c" style="left:595px;width:90px"><span class="t" style="left:2.70px;top:2px;transform:scaleX(0.9650)">0</span></div>
<div class="c" style="left:685px;width:70px"><span class="t" style="left:2.70px;top:2px;transform:scaleX(0.9650)">0</span></div>
<div class="c" style="left:755px;width:70px"><span class="t" style="left:2.70px;top:2px;transform:scaleX(0.9650)">0</span></div>
<div class="c" style="left:825px;width:70px"><span class="t" style="left:2.70px;top:2px;transform:scaleX(0.9650)">0</span></div>
<div class="c" style="left:895px;width:88px"><span class="t" style="left:2.70px;top:2px;transform:scaleX(0.9870)">28-Jun-16</span></div>
</div>
<div class="row" style="top:303px;height:19px">
<div class="c" style="left:0;width:25px"><i class="cb"></i></div>
<div class="c" style="left:25px;width:50px"><span class="t" style="left:2.70px;top:2px;transform:scaleX(0.9650)">17</span></div>
<div class="c" style="left:75px;width:100px"><span class="t" style="left:2.70px;top:2px;transform:scaleX(0.9685)">79099194626</span></div>
<div class="c" style="left:175px;width:200px"><span class="t" style="left:2.70px;top:2px;transform:scaleX(0.9500)">WaGFB+7aXcyUx3mVRaRZvM49o7Mk=</span></div>
<div class="c" style="left:375px;width:80px"><span class="t" style="left:2.70px;top:2px;transform:scaleX(0.9703)">Kristen</span></div>
<div class="c" style="left:455px;width:70px"><span class="t" style="left:2.70px;top:2px;transform:scaleX(0.9650)">0</span></div>
<div class="c" style="left:525px;width:70px"><span class="t" style="left:2.70px;top:2px;transform:scaleX(0.9650)">0</span></div>
<div class="c" style="left:595px;width:90px"><span class="t" style="left:2.70px;top:2px;transform:scaleX(0.9650)">0</span></div>
<div class="c" style="left:685px;width:70px"><span class="t" style="left:2.70px;top:2px;transform:scaleX(0.9650)">0</span></div>
<div class="c" style="left:755px;width:70px"><span class="t" style="left:2.70px;top:2px;transform:scaleX(0.9650)">0</span></div>
<div class="c" style="left:825px;width:70px"><span class="t" style="left:2.70px;top:2px;transform:scaleX(0.9650)">0</span></div>
<div class="c" style="left:895px;width:88px"><span class="t" style="left:2.70px;top:2px;transform:scaleX(0.9870)">28-Jun-16</span></div>
</div>
<div class="row" style="top:322px;height:19px">
<div class="c" style="left:0;width:25px"><i class="cb"></i></div>
<div class="c" style="left:25px;width:50px"><span class="t" style="left:2.70px;top:2px;transform:scaleX(0.9650)">18</span></div>
<div class="c" style="left:75px;width:100px"><span class="t" style="left:2.70px;top:2px;transform:scaleX(0.9685)">79099177854</span></div>
<div class="c" style="left:175px;width:200px"><span class="t" style="left:2.70px;top:2px;transform:scaleX(0.9291)">EHFESXXlhdDEgac5AB9UrlgMNJY=</span></div>
<div class="c" style="left:375px;width:80px"><span class="t" style="left:2.70px;top:2px;transform:scaleX(0.9535)">Jennifer</span></div>
<div class="c" style="left:455px;width:70px"><span class="t" style="left:2.70px;top:2px;transform:scaleX(0.9650)">0</span></div>
<div class="c" style="left:525px;width:70px"><span class="t" style="left:2.70px;top:2px;transform:scaleX(0.9650)">0</span></div>
<div class="c" style="left:595px;width:90px"><span class="t" style="left:2.70px;top:2px;transform:scaleX(0.9650)">0</span></div>
<div class="c" style="left:685px;width:70px"><span class="t" style="left:2.70px;top:2px;transform:scaleX(0.9650)">0</span></div>
<div class="c" style="left:755px;width:70px"><span class="t" style="left:2.70px;top:2px;transform:scaleX(0.9650)">0</span></div>
<div class="c" style="left:825px;width:70px"><span class="t" style="left:2.70px;top:2px;transform:scaleX(0.9650)">0</span></div>
<div class="c" style="left:895px;width:88px"><span class="t" style="left:2.70px;top:2px;transform:scaleX(0.9870)">28-Jun-16</span></div>
</div>
<div class="row" style="top:341px;height:19px">
<div class="c" style="left:0;width:25px"><i class="cb"></i></div>
<div class="c" style="left:25px;width:50px"><span class="t" style="left:2.70px;top:2px;transform:scaleX(0.9650)">19</span></div>
<div class="c" style="left:75px;width:100px"><span class="t" style="left:2.70px;top:2px;transform:scaleX(0.9685)">79096959827</span></div>
<div class="c" style="left:175px;width:200px"><span class="t" style="left:2.70px;top:2px;transform:scaleX(0.9809)">4kN0a5czmFe0dfp+uGti2XaUe2A=</span></div>
<div class="c" style="left:375px;width:80px"><span class="t" style="left:2.70px;top:2px;transform:scaleX(0.9935)">Adam</span></div>
<div class="c" style="left:455px;width:70px"><span class="t" style="left:2.70px;top:2px;transform:scaleX(0.9650)">0</span></div>
<div class="c" style="left:525px;width:70px"><span class="t" style="left:2.70px;top:2px;transform:scaleX(0.9650)">0</span></div>
<div class="c" style="left:595px;width:90px"><span class="t" style="left:2.70px;top:2px;transform:scaleX(0.9650)">0</span></div>
<div class="c" style="left:685px;width:70px"><span class="t" style="left:2.70px;top:2px;transform:scaleX(0.9650)">0</span></div>
<div class="c" style="left:755px;width:70px"><span class="t" style="left:2.70px;top:2px;transform:scaleX(0.9650)">0</span></div>
<div class="c" style="left:825px;width:70px"><span class="t" style="left:2.70px;top:2px;transform:scaleX(0.9650)">0</span></div>
<div class="c" style="left:895px;width:88px"><span class="t" style="left:2.70px;top:2px;transform:scaleX(0.9870)">28-Jun-16</span></div>
</div>
<div class="row" style="top:360px;height:19px">
<div class="c" style="left:0;width:25px"><i class="cb"></i></div>
<div class="c" style="left:25px;width:50px"><span class="t" style="left:2.70px;top:2px;transform:scaleX(0.9650)">20</span></div>
<div class="c" style="left:75px;width:100px"><span class="t" style="left:2.70px;top:2px;transform:scaleX(0.9685)">79057438867</span></div>
<div class="c" style="left:175px;width:200px"><span class="t" style="left:2.70px;top:2px;transform:scaleX(0.9859)">tss8wtwJ2jst8kXbf07N+71k7BQ=</span></div>
<div class="c" style="left:375px;width:80px"><span class="t" style="left:2.70px;top:2px;transform:scaleX(0.9745)">Christina</span></div>
<div class="c" style="left:455px;width:70px"><span class="t" style="left:2.70px;top:2px;transform:scaleX(0.9650)">0</span></div>
<div class="c" style="left:525px;width:70px"><span class="t" style="left:2.70px;top:2px;transform:scaleX(0.9650)">0</span></div>
<div class="c" style="left:595px;width:90px"><span class="t" style="left:2.70px;top:2px;transform:scaleX(0.9650)">0</span></div>
<div class="c" style="left:685px;width:70px"><span class="t" style="left:2.70px;top:2px;transform:scaleX(0.9650)">0</span></div>
<div class="c" style="left:755px;width:70px"><span class="t" style="left:2.70px;top:2px;transform:scaleX(0.9650)">0</span></div>
<div class="c" style="left:825px;width:70px"><span class="t" style="left:2.70px;top:2px;transform:scaleX(0.9650)">0</span></div>
<div class="c" style="left:895px;width:88px"><span class="t" style="left:2.70px;top:2px;transform:scaleX(0.9870)">28-Jun-16</span></div>
</div>
<div class="row" style="top:379px;height:19px">
<div class="c" style="left:0;width:25px"><i class="cb"></i></div>
<div class="c" style="left:25px;width:50px"><span class="t" style="left:2.70px;top:2px;transform:scaleX(0.9650)">21</span></div>
<div class="c" style="left:75px;width:100px"><span class="t" style="left:2.70px;top:2px;transform:scaleX(0.9685)">79096956579</span></div>
<div class="c" style="left:175px;width:200px"><span class="t" style="left:2.70px;top:2px;transform:scaleX(0.9459)">KZrHKBJ26aZut2xhDusDvEznskI=</span></div>
<div class="c" style="left:375px;width:80px"><span class="t" style="left:2.70px;top:2px;transform:scaleX(0.9735)">Chrish</span></div>
<div class="c" style="left:455px;width:70px"><span class="t" style="left:2.70px;top:2px;transform:scaleX(0.9650)">0</span></div>
<div class="c" style="left:525px;width:70px"><span class="t" style="left:2.70px;top:2px;transform:scaleX(0.9650)">0</span></div>
<div class="c" style="left:595px;width:90px"><span class="t" style="left:2.70px;top:2px;transform:scaleX(0.9650)">0</span></div>
<div class="c" style="left:685px;width:70px"><span class="t" style="left:2.70px;top:2px;transform:scaleX(0.9650)">0</span></div>
<div class="c" style="left:755px;width:70px"><span class="t" style="left:2.70px;top:2px;transform:scaleX(0.9650)">0</span></div>
<div class="c" style="left:825px;width:70px"><span class="t" style="left:2.70px;top:2px;transform:scaleX(0.9650)">0</span></div>
<div class="c" style="left:895px;width:88px"><span class="t" style="left:2.70px;top:2px;transform:scaleX(0.9870)">28-Jun-16</span></div>
</div>
<div class="row" style="top:398px;height:19px">
<div class="c" style="left:0;width:25px"><i class="cb"></i></div>
<div class="c" style="left:25px;width:50px"><span class="t" style="left:2.70px;top:2px;transform:scaleX(0.9650)">22</span></div>
<div class="c" style="left:75px;width:100px"><span class="t" style="left:2.70px;top:2px;transform:scaleX(0.9685)">79096955963</span></div>
<div class="c" style="left:175px;width:200px"><span class="t" style="left:2.70px;top:2px;transform:scaleX(0.9580)">x+i9F3HzIVb8spGWIGIzEcboWRA=</span></div>
<div class="c" style="left:375px;width:80px"><span class="t" style="left:2.70px;top:2px;transform:scaleX(0.9774)">Elbert</span></div>
<div class="c" style="left:455px;width:70px"><span class="t" style="left:2.70px;top:2px;transform:scaleX(0.9650)">0</span></div>
<div class="c" style="left:525px;width:70px"><span class="t" style="left:2.70px;top:2px;transform:scaleX(0.9650)">0</span></div>
<div class="c" style="left:595px;width:90px"><span class="t" style="left:2.70px;top:2px;transform:scaleX(0.9650)">0</span></div>
<div class="c" style="left:685px;width:70px"><span class="t" style="left:2.70px;top:2px;transform:scaleX(0.9650)">0</span></div>
<div class="c" style="left:755px;width:70px"><span class="t" style="left:2.70px;top:2px;transform:scaleX(0.9650)">0</span></div>
<div class="c" style="left:825px;width:70px"><span class="t" style="left:2.70px;top:2px;transform:scaleX(0.9650)">0</span></div>
<div class="c" style="left:895px;width:88px"><span class="t" style="left:2.70px;top:2px;transform:scaleX(0.9870)">28-Jun-16</span></div>
</div>
<div class="row" style="top:417px;height:19px">
<div class="c" style="left:0;width:25px"><i class="cb"></i></div>
<div class="c" style="left:25px;width:50px"><span class="t" style="left:2.70px;top:2px;transform:scaleX(0.9650)">23</span></div>
<div class="c" style="left:75px;width:100px"><span class="t" style="left:2.70px;top:2px;transform:scaleX(0.9685)">79096955773</span></div>
<div class="c" style="left:175px;width:200px"><span class="t" style="left:2.70px;top:2px;transform:scaleX(0.9500)">8cvaUnMJaz6fYTg9d4l896Y2KIEU=</span></div>
<div class="c" style="left:375px;width:80px"><span class="t" style="left:2.70px;top:2px;transform:scaleX(0.9448)">Barry</span></div>
<div class="c" style="left:455px;width:70px"><span class="t" style="left:2.70px;top:2px;transform:scaleX(0.9650)">0</span></div>
<div class="c" style="left:525px;width:70px"><span class="t" style="left:2.70px;top:2px;transform:scaleX(0.9650)">0</span></div>
<div class="c" style="left:595px;width:90px"><span class="t" style="left:2.70px;top:2px;transform:scaleX(0.9650)">0</span></div>
<div class="c" style="left:685px;width:70px"><span class="t" style="left:2.70px;top:2px;transform:scaleX(0.9650)">0</span></div>
<div class="c" style="left:755px;width:70px"><span class="t" style="left:2.70px;top:2px;transform:scaleX(0.9650)">0</span></div>
<div class="c" style="left:825px;width:70px"><span class="t" style="left:2.70px;top:2px;transform:scaleX(0.9650)">0</span></div>
<div class="c" style="left:895px;width:88px"><span class="t" style="left:2.70px;top:2px;transform:scaleX(0.9870)">28-Jun-16</span></div>
</div>
</div>
<div id="vs"><div id="vthumb">
<svg class="abs" style="left:3px;top:19px" width="8" height="9"><path d="M0 .5h8M0 3.500h8M0 6.500h8" stroke="#5e5e5e" stroke-width="1"/><path d="M0 1.500h8M0 4.500h8M0 7.500h8" stroke="#fff" stroke-width="1" opacity=".7"/></svg></div>
<svg class="abs" style="left:5px;top:6px" width="7" height="4"><path d="M0 4L3.500 0 7 4z" fill="#868686"/></svg>
<svg class="abs" style="left:5px;top:411px" width="7" height="4"><path d="M0 0L3.500 4 7 0z" fill="#868686"/></svg>
</div>
<div id="hs"><div id="hthumb">
<svg class="abs" style="left:283px;top:2px" width="9" height="9"><path d="M.5 0v8M3.500 0v8M6.500 0v8" stroke="#5e5e5e" stroke-width="1"/><path d="M1.500 0v8M4.500 0v8M7.500 0v8" stroke="#fff" stroke-width="1" opacity=".7"/></svg></div>
<svg class="abs" style="left:6px;top:5px" width="4" height="7"><path d="M4 0L0 3.500 4 7z" fill="#868686"/></svg>
<svg class="abs" style="left:972px;top:5px" width="4" height="7"><path d="M0 0L4 3.500 0 7z" fill="#868686"/></svg>
</div>

</div>


</body></html>
